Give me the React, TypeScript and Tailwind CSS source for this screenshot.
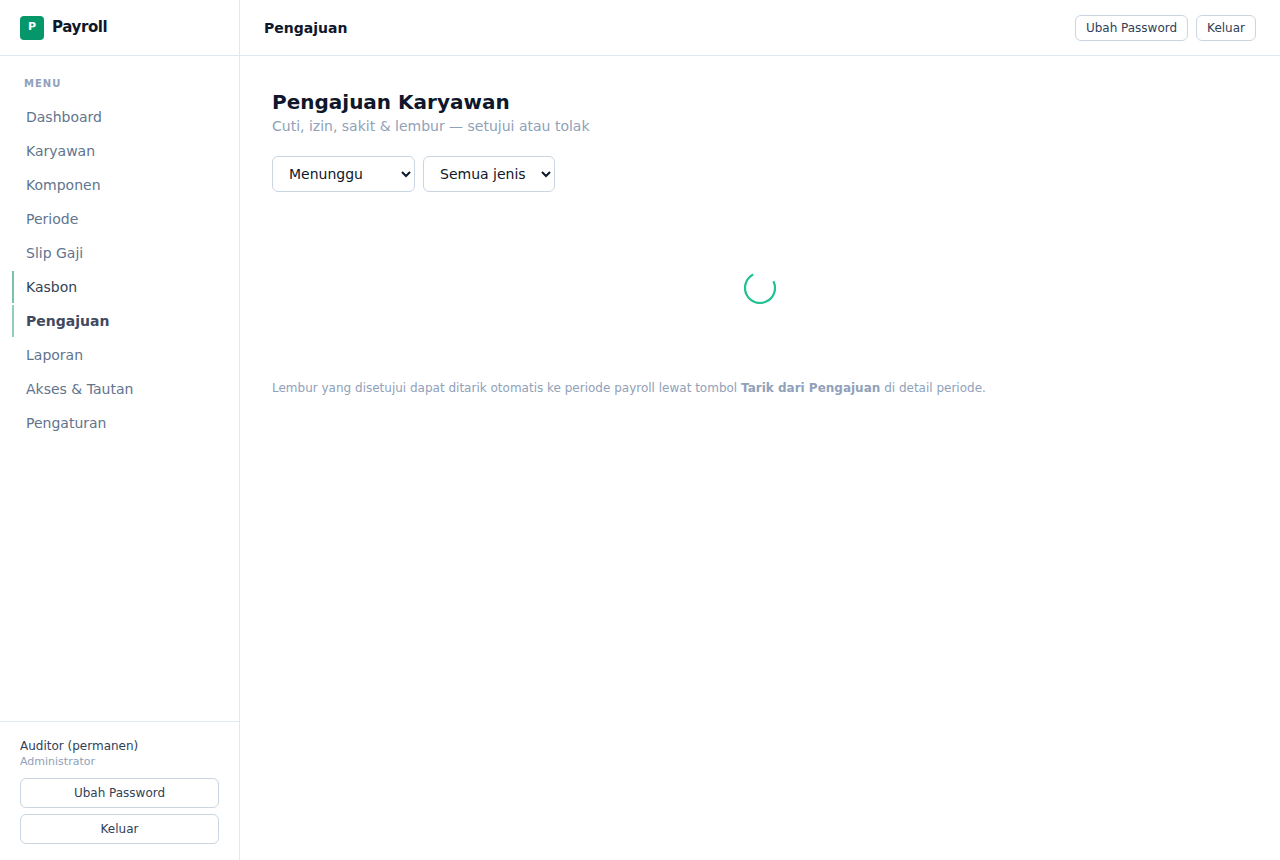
import React, { useState } from 'react';
import clsx from 'clsx';

type MenuItem = {
  label: string;
  href: string;
};

const menu: MenuItem[] = [
  { label: 'Dashboard', href: '#dashboard' },
  { label: 'Karyawan', href: '#karyawan' },
  { label: 'Komponen', href: '#komponen' },
  { label: 'Periode', href: '#periode' },
  { label: 'Slip Gaji', href: '#slip-gaji' },
  { label: 'Kasbon', href: '#kasbon' },
  { label: 'Pengajuan', href: '#pengajuan' },
  { label: 'Laporan', href: '#laporan' },
  { label: 'Akses & Tautan', href: '#akses' },
  { label: 'Pengaturan', href: '#pengaturan' },
];

// Colours per item state, everything else is plain slate
const itemStyles: Record<string, string> = {
  Kasbon: 'border-[#78c3a6] text-[#334155]',
  Pengajuan: 'border-[#8fcfb8] font-semibold text-[#3f4a60]',
};

function Spinner() {
  return (
    <svg className="h-8 w-8" viewBox="0 0 32 32" fill="none" role="status" aria-label="Memuat">
      <path
        d="M9.2 2.6A15 15 0 1 0 29.4 9.2"
        stroke="#22c193"
        strokeWidth="2.2"
      />
    </svg>
  );
}

function Sidebar() {
  return (
    <aside className="flex w-60 shrink-0 flex-col border-r border-slate-200">
      <div className="flex h-14 items-center gap-2 border-b border-slate-200 px-5">
        <div className="flex h-6 w-6 justify-center rounded bg-[#059669] pt-1 text-[11px] leading-[14px] font-bold text-white">
          P
        </div>
        <span className="pb-0.5 text-[15px] leading-5 font-bold tracking-tight text-slate-900">Payroll</span>
      </div>

      <nav className="flex-1 px-3 pt-5">
        <p className="mb-2.5 px-3 text-[10px] leading-[15px] font-semibold tracking-widest text-slate-400">MENU</p>
        <ul className="flex flex-col gap-0.5">
          {menu.map((item) => (
            <li key={item.label}>
              <a
                href={item.href}
                className={clsx(
                  'block border-l-2 px-3 py-1.5 text-sm',
                  itemStyles[item.label] ?? 'border-transparent text-slate-500'
                )}
              >
                {item.label}
              </a>
            </li>
          ))}
        </ul>
      </nav>

      {/* User */}
      <div className="border-t border-slate-200 px-5 py-4">
        <p className="text-xs text-slate-700">Auditor (permanen)</p>
        <p className="text-[11px] leading-4 text-slate-400">Administrator</p>
        <div className="mt-2 flex flex-col gap-1.5">
          <button className="rounded-md border border-slate-300 px-3 py-1.5 text-xs text-slate-700">
            Ubah Password
          </button>
          <button className="rounded-md border border-slate-300 px-3 py-1.5 text-xs text-slate-700">
            Keluar
          </button>
        </div>
      </div>
    </aside>
  );
}

export default function App() {
  const [status, setStatus] = useState<string>('menunggu');
  const [jenis, setJenis] = useState<string>('semua');

  return (
    <div className="flex min-h-screen bg-white font-['DejaVu_Sans',sans-serif]">
      <Sidebar />

      <div className="flex min-w-0 flex-1 flex-col">
        <header className="flex h-14 items-center justify-between border-b border-slate-200 px-6">
          <h2 className="text-sm font-semibold text-slate-900">Pengajuan</h2>
          <div className="flex gap-2">
            <button className="rounded-md border border-slate-300 px-2.5 py-1 text-xs text-slate-700">
              Ubah Password
            </button>
            <button className="rounded-md border border-slate-300 px-2.5 py-1 text-xs text-slate-700">
              Keluar
            </button>
          </div>
        </header>

        <main className="p-8">
          <h1 className="text-xl font-semibold text-slate-900">Pengajuan Karyawan</h1>
          <p className="text-sm text-slate-400">Cuti, izin, sakit &amp; lembur — setujui atau tolak</p>

          {/* Filter */}
          <div className="mt-5 flex gap-2">
            <select
              aria-label="Status"
              value={status}
              onChange={(e) => setStatus(e.target.value)}
              className="h-9 rounded-md border border-slate-300 bg-white px-3 text-sm text-slate-900"
            >
              <option value="menunggu">Menunggu</option>
              <option value="disetujui">Disetujui</option>
              <option value="ditolak">Ditolak</option>
              <option value="semua">Semua status</option>
            </select>
            <select
              aria-label="Jenis"
              value={jenis}
              onChange={(e) => setJenis(e.target.value)}
              className="h-9 rounded-md border border-slate-300 bg-white px-3 text-sm text-slate-900"
            >
              <option value="semua">Semua jenis</option>
              <option value="cuti">Cuti</option>
              <option value="izin">Izin</option>
              <option value="sakit">Sakit</option>
              <option value="lembur">Lembur</option>
            </select>
          </div>

          <div className="flex justify-center pt-20 pb-19">
            <Spinner />
          </div>

          <p className="text-xs text-slate-400">
            Lembur yang disetujui dapat ditarik otomatis ke periode payroll lewat tombol{' '}
            <strong className="font-semibold">Tarik dari Pengajuan</strong> di detail periode.
          </p>
        </main>
      </div>
    </div>
  );
}
